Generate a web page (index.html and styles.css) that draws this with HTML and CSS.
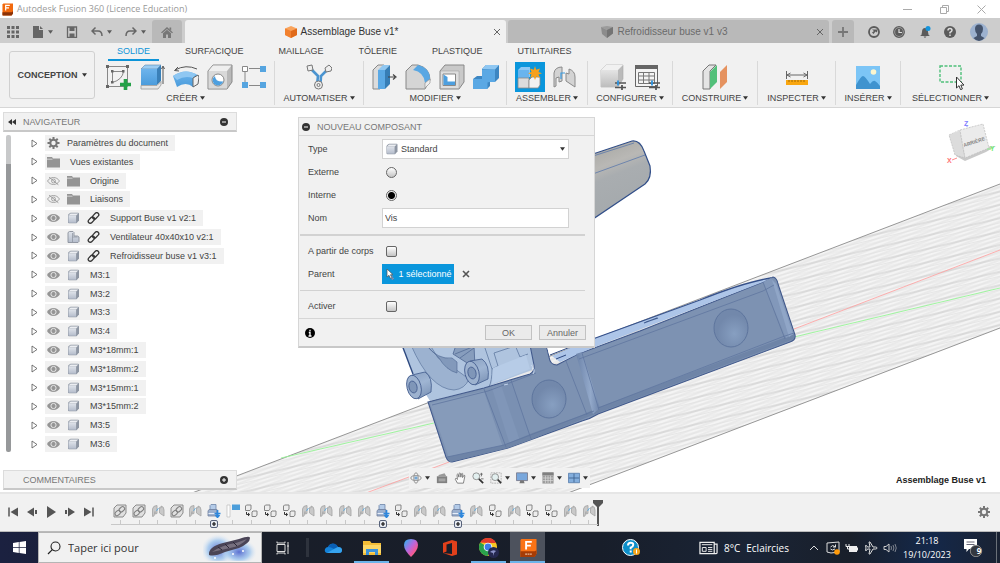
FILE: index.html
```html
<!DOCTYPE html>
<html lang="fr">
<head>
<meta charset="utf-8">
<title>Autodesk Fusion 360 (Licence Education)</title>
<link rel="stylesheet" href="styles.css">
</head>
<body>
<svg class="defs" aria-hidden="true">
  <defs>
    <linearGradient id="gBody" x1="0" y1="0" x2="0" y2="1"><stop offset="0" stop-color="#dfe3ea"/><stop offset="1" stop-color="#b4bccb"/></linearGradient>
    <linearGradient id="gBlue" x1="0" y1="0" x2="0" y2="1"><stop offset="0" stop-color="#6db4ec"/><stop offset="1" stop-color="#4b9cdc"/></linearGradient>
    <linearGradient id="gGrey" x1="0" y1="0" x2="0" y2="1"><stop offset="0" stop-color="#e4e4e4"/><stop offset="1" stop-color="#bdbdbd"/></linearGradient>
    <symbol id="caret" viewBox="0 0 6 4"><path d="M0 0h6L3 4z" fill="currentColor"/></symbol>
    <symbol id="tri" viewBox="0 0 7 9"><path d="M1 1v7l5-3.500z" fill="#fff" stroke="#555" stroke-width=".8"/></symbol>
    <symbol id="gear" viewBox="0 0 12 12"><circle cx="6" cy="6" r="3.200" fill="none" stroke="currentColor" stroke-width="2"/><path d="M6 0v2.500M6 9.500V12M0 6h2.500M9.500 6H12M1.800 1.800l1.700 1.700M8.500 8.500l1.700 1.700M1.800 10.200l1.700-1.700M8.500 3.500l1.700-1.700" stroke="currentColor" stroke-width="2"/></symbol>
    <symbol id="folder" viewBox="0 0 13 11"><path d="M0 .5h5l1 1.500h7V11H0z" fill="#949494"/><path d="M0 2.700h5.500" stroke="#eee" stroke-width=".7"/></symbol>
    <symbol id="eye" viewBox="0 0 12 8"><path d="M0 4C2.500-1 9.500-1 12 4 9.500 9 2.500 9 0 4z" fill="#959595"/><circle cx="6" cy="4" r="2.400" fill="none" stroke="#f0f0f0" stroke-width=".8"/></symbol>
    <symbol id="eyeoff" viewBox="0 0 12 8"><path d="M.5 4C3-.3 9-.3 11.500 4 9 8.300 3 8.300.5 4z" fill="none" stroke="#999" stroke-width=".8"/><circle cx="6" cy="4" r="1.800" fill="none" stroke="#999" stroke-width=".8"/><path d="M2 .5l8.500 7" stroke="#999" stroke-width=".9"/></symbol>
    <symbol id="body" viewBox="0 0 12 12"><path d="M.5 3.500Q.5 2.500 1.200 2L3 .8h7.500q1 0 1 1V8.500L9 11.300H1.500q-1 0-1-1z" fill="#8e96a3"/><path d="M1 3.600L3 1.400h7.800L8.600 3.600z" fill="#eceef2"/><path d="M1 3.600h7.600v7.200H1.800q-.8 0-.8-.8z" fill="url(#gBody)"/></symbol>
    <symbol id="asm" viewBox="0 0 12 12"><path d="M.5 1.500L2 .5h3.500l1 1V5H10l1.500 1v4.500l-1 1H.5z" fill="url(#gBody)" stroke="#8a919c" stroke-width=".9"/><path d="M5 2v9M5 6h5" stroke="#8a919c" stroke-width=".7"/></symbol>
    <symbol id="link" viewBox="0 0 12 12"><g fill="none" stroke="#333" stroke-width="1.300" transform="rotate(-45 6 6)"><rect x="-.6" y="4" width="7.200" height="4" rx="2"/><rect x="5.400" y="4" width="7.200" height="4" rx="2"/></g></symbol>
    <symbol id="minus" viewBox="0 0 8 8"><circle cx="4" cy="4" r="4" fill="#333"/><path d="M2 4h4" stroke="#fff"/></symbol>
    <symbol id="plusdot" viewBox="0 0 8 8"><circle cx="4" cy="4" r="4" fill="#333"/><path d="M2 4h4M4 2v4" stroke="#fff"/></symbol>
    <symbol id="cross" viewBox="0 0 8 8"><path d="M1 1l6 6M7 1L1 7" stroke="currentColor" fill="none"/></symbol>
    <symbol id="tl-link" viewBox="0 0 14 14"><path d="M1 4l3-3h9v8l-3 4H1z" fill="#e0e0e0" stroke="#8b8b8b"/><g fill="none" stroke="#808080" stroke-width="1.100" transform="rotate(-42 7 7)"><rect x="1" y="5" width="6" height="4" rx="2"/><rect x="6.500" y="5" width="6" height="4" rx="2"/></g></symbol>
    <symbol id="joint" viewBox="0 0 14 14"><path d="M1.500 12.500V5Q2 1.500 6 1.500v8L4 10V7.500L3 12z" fill="#c9c9c9" stroke="#a3a3a3" stroke-width=".8"/><path d="M8.500 3.500l1.500.5V2q3 .5 3 4v6L8.500 9z" fill="#c9c9c9" stroke="#a3a3a3" stroke-width=".8"/><path d="M5.500 7l2-3" stroke="#5fa9dd" stroke-width=".9"/></symbol>
    <symbol id="copy" viewBox="0 0 14 14"><path d="M1.500 2l1-1H7v4L6 6.500H1.500zM8 8l1-1h4v4l-1 1.500H8z" fill="#ededed" stroke="#858585"/><path d="M2.500 8v2.500H5M4 9l1.700 1.500L4 12" stroke="#333" fill="none"/></symbol>
    <symbol id="newc" viewBox="0 0 14 14"><path d="M3 1.500L4 .5h5v5H3z" fill="#b4cbe8" stroke="#6f87aa" stroke-width=".8"/><path d="M1 7l1-1.500h8V12H1z" fill="#9cb0ce" stroke="#7181a0" stroke-width=".8"/><path d="M1.500 9.500h7" stroke="#e8eef8"/><path d="M10.500 6v7M7.500 9.500h6M8.500 11l2 2.300 2-2.300" stroke="#2e87dc" stroke-width="1.700" fill="none"/></symbol>
    <symbol id="flag" viewBox="0 0 14 14"><path d="M1 1h3v12H1z" fill="#fdfdfd" stroke="#bbb" stroke-width=".7"/><path d="M6 .5h8v5.500H6z" fill="#4d9fdb"/></symbol>
    <symbol id="boxplus" viewBox="0 0 8 8"><rect x=".5" y=".5" width="7" height="7" rx="1.500" fill="#e7ebf2" stroke="#56617a"/><path d="M2 4h4M4 2v4" stroke="#111" stroke-width="1.200"/></symbol>
  </defs>
</svg>

<header class="titlebar">
  <svg class="applogo" viewBox="0 0 12 13"><path d="M1.500 0H12v10l-1.500 3H1L.5 12V1z" fill="#f2690d"/><path d="M.5 9.500h10l1.500-1V11l-1.500 2H.5z" fill="#8c3206"/><path d="M4 7.500V2h4.500M4 4.700h3.600" stroke="#fff" stroke-width="1.300" fill="none"/></svg>
  <h1>Autodesk Fusion 360 (Licence Education)</h1>
  <div class="winbtns">
    <button aria-label="Réduire"><svg viewBox="0 0 9 9"><path d="M0 4.500h9" stroke="#aaa"/></svg></button>
    <button aria-label="Restaurer"><svg viewBox="0 0 9 9"><path d="M.5 2.500h6v6h-6zM2.500 2.500v-2h6v6h-2" stroke="#aaa" fill="none"/></svg></button>
    <button aria-label="Fermer"><svg viewBox="0 0 9 9"><path d="M.5.5l8 8M8.500.5l-8 8" stroke="#aaa"/></svg></button>
  </div>
</header>

<div class="docbar">
  <div class="quick">
    <button aria-label="Données"><svg class="i12" viewBox="0 0 12 12"><path d="M0 0h3v3H0zM4.500 0h3v3h-3zM9 0h3v3H9zM0 4.500h3v3H0zM4.500 4.500h3v3h-3zM9 4.500h3v3H9zM0 9h3v3H0zM4.500 9h3v3h-3zM9 9h3v3H9z" fill="#666"/></svg></button>
    <button aria-label="Fichier"><svg class="i12" viewBox="0 0 12 12"><path d="M1 0h6v4h4v8H1z" fill="#666"/><path d="M8 0l3 3H8z" fill="#666"/></svg><svg class="caret"><use href="#caret"/></svg></button>
    <button aria-label="Enregistrer"><svg class="i12" viewBox="0 0 12 12"><path d="M1.500 1h9v10.300h-9z" fill="none" stroke="#666" stroke-width="1.300"/><path d="M3.500 1h5v4h-5zM3.500 7.500h5V11h-5z" fill="#666"/></svg></button>
    <button aria-label="Annuler"><svg class="i12" viewBox="0 0 12 12"><path d="M4.500 1.500L1 5l3.500 3.500M1.300 5H7q4 0 4 5" fill="none" stroke="#666" stroke-width="1.500"/></svg><svg class="caret"><use href="#caret"/></svg></button>
    <button aria-label="Rétablir"><svg class="i12" viewBox="0 0 12 12"><path d="M7.500 1.500L11 5 7.500 8.500M10.700 5H5q-4 0-4 5" fill="none" stroke="#666" stroke-width="1.500"/></svg><svg class="caret"><use href="#caret"/></svg></button>
  </div>
  <button class="home" aria-label="Accueil"><svg class="i12" viewBox="0 0 12 12"><path d="M6 1l6 5.500-1 .8L6 3 1 7.300l-1-.8zM2 7.200L6 3.800l4 3.400V12H7V8.500H5V12H2zM8.500 1.500h1.700v3l-1.700-1.500z" fill="#777"/></svg></button>
  <div class="doctab active">
    <svg class="i12" viewBox="0 0 12 12"><path d="M6 0l6 2.500V9L6 12 0 9V2.500z" fill="#f9a35c"/><path d="M0 2.500L6 5v7L0 9z" fill="#f2812f"/><path d="M12 2.500L6 5v7l6-3z" fill="#e06a1a"/></svg>
    <span>Assemblage Buse v1*</span>
    <button aria-label="Fermer l'onglet"><svg class="i8"><use href="#cross"/></svg></button>
  </div>
  <div class="doctab">
    <svg class="i12" viewBox="0 0 12 12"><path d="M0 1l6-1 6 1v6l-6 5V4z" fill="#9b9b9b"/><path d="M0 1l6 3v8L1 8z" fill="#8c8c8c"/><path d="M6 4l6-3v6.500L6 12z" fill="#747474"/></svg>
    <span>Refroidisseur buse v1 v3</span>
    <button aria-label="Fermer l'onglet"><svg class="i8"><use href="#cross"/></svg></button>
  </div>
  <div class="docright">
    <button class="newtab" aria-label="Nouvelle conception"><svg class="i10" viewBox="0 0 10 10"><path d="M0 5h10M5 0v10" stroke="#777" stroke-width="1.800"/></svg></button>
    <button aria-label="Extensions"><svg class="i12" viewBox="0 0 12 12"><circle cx="6" cy="6" r="5" fill="none" stroke="#5b5b5b" stroke-width="1.800"/><path d="M4 3.500h5l1-2-1 5-1.500-1L5.500 8 4 6.500 6 5z" fill="#5b5b5b"/></svg></button>
    <button aria-label="Etat"><svg class="i12" viewBox="0 0 12 12"><circle cx="6" cy="6" r="5.300" fill="#aaa" stroke="#5b5b5b" stroke-width="1.200"/><circle cx="6" cy="6" r="3.900" fill="#5b5b5b"/><path d="M6 3v3.500h3" fill="none" stroke="#ddd" stroke-width="1.200"/></svg></button>
    <button aria-label="Notifications"><svg class="i12" viewBox="0 0 12 12"><path d="M1 10q2-1 2-4 0-4 3-4t3 4q0 3 2 4zM4.500 10.500h3L6 12z" fill="#5b5b5b"/><circle cx="9" cy="2.500" r="2.500" fill="#1495dd"/></svg></button>
    <button aria-label="Aide"><svg class="i12" viewBox="0 0 12 12"><circle cx="6" cy="6" r="6" fill="#5b5b5b"/><path d="M4 4.500q0-2 2-2t2 1.800Q8 5.500 6 6.500v1M6 8.500V10" fill="none" stroke="#ddd" stroke-width="1.500"/></svg></button>
    <button aria-label="Profil"><svg class="i18" viewBox="0 0 18 18"><circle cx="9" cy="9" r="9" fill="#9cb1cf"/><path d="M5 6q0-4.500 4-4.500T13 6q0 3-2 5v2l3.500 2Q12 18 9 18t-5.500-3L7 13v-2Q5 9 5 6z" fill="#44536c"/></svg></button>
  </div>
</div>

<div class="ribbon">
  <div class="workspace"><button>CONCEPTION<svg class="caret"><use href="#caret"/></svg></button></div>
  <div class="tools">
    <nav class="rtabs">
      <button class="on">SOLIDE</button><button>SURFACIQUE</button><button>MAILLAGE</button><button>TÔLERIE</button><button>PLASTIQUE</button><button>UTILITAIRES</button>
    </nav>
    <div class="groups">
      <section class="group">
        <div class="icons">
          <button aria-label="Esquisse"><svg viewBox="0 0 26 26"><path d="M2.500 2.500h20v20h-20z" fill="none" stroke="#888"/><path d="M1 1h3v3H1zM21 1h3v3h-3zM1 21h3v3H1z" fill="#666"/><path d="M7.500 7.500h11q-1 8-11 11z" fill="none" stroke="#888"/><path d="M6 6h2.500v2.500H6zM17 6h2.500v2.500H17zM6 17h2.500v2.500H6z" fill="#666"/><path d="M20.500 15v11M15 20.500h11" stroke="#24a148" stroke-width="3.600"/></svg></button>
          <button aria-label="Extrusion"><svg viewBox="0 0 26 26"><path d="M2 5l4-4h16l-4 4z" fill="#9bcdf3" stroke="#5c87ad" stroke-width=".6"/><path d="M2 5h16v16H2z" fill="url(#gBlue)"/><path d="M18 5l4-4v16l-4 4z" fill="#3a80b8"/><path d="M2 21.500h16l4-4v3.500l-3 4H2z" fill="#e6e6e6" stroke="#999" stroke-width=".8"/><path d="M24 3v17M22.500 5L24 2l1.500 3" fill="none" stroke="#555"/></svg></button>
          <button aria-label="Révolution"><svg viewBox="0 0 26 26"><path d="M0 12Q13 3 26 12l-1 8-5 3Q13 17 4 23z" fill="url(#gBlue)"/><path d="M0 12Q12 4 23 10l-3 4q-8-3-16 2z" fill="#8fc7f2"/><path d="M20 14l5-3 1 2-1 7-5 3z" fill="#eee" stroke="#666"/><path d="M2 6q11-6 22-1M5 3L1.500 6.500 6 7" fill="none" stroke="#555"/></svg></button>
          <button aria-label="Perçage"><svg viewBox="0 0 26 26"><path d="M1 7l5-6h19v17l-5 7H1z" fill="#b9b9b9" stroke="#888"/><path d="M1.500 7l4.500-5.500h18.500L20 7z" fill="#efefef"/><path d="M1.500 7H20v17.500H1.500z" fill="#d9d9d9"/><circle cx="11" cy="16" r="6" fill="#fff" stroke="#888"/><path d="M8 12q0 6 8.500 5.500Q14 21.500 11 21.500q-5-.5-5.500-5.500Q6 13 8 12z" fill="#4d9fdf"/></svg></button>
          <button aria-label="Réseau"><svg viewBox="0 0 26 26"><path d="M8 4.500h11M4 8v11M8 21.500h11" stroke="#888"/><path d="M1.500 2.500h5v5h-5z" fill="#fff" stroke="#888"/><path d="M19 2h6v6h-6zM1 18h6v6H1zM19 18h6v6h-6z" fill="#56a5e0"/></svg></button>
        </div>
        <button class="glabel">CRÉER<svg class="caret"><use href="#caret"/></svg></button>
      </section>
      <section class="group">
        <div class="icons"><button aria-label="Automatiser"><svg viewBox="0 0 26 26"><path d="M4 4l8 8q-1 5 0 8h2q1-3 1-8l7-7" fill="none" stroke="#4a94d0" stroke-width="2.600"/><path d="M1 2l5-1 1 5-5 1z" fill="#eee" stroke="#777"/><path d="M19 4l4-3 3 3-1 3-5 1z" fill="#eee" stroke="#777"/><circle cx="12.500" cy="21" r="4" fill="#eee" stroke="#777"/><circle cx="12.500" cy="21" r="1.500" fill="none" stroke="#777"/></svg></button></div>
        <button class="glabel">AUTOMATISER<svg class="caret"><use href="#caret"/></svg></button>
      </section>
      <section class="group">
        <div class="icons">
          <button aria-label="Appuyer/tirer"><svg viewBox="0 0 26 26"><path d="M2 6l5-5h6L9 6v19H2z" fill="#dcdcdc" stroke="#888"/><path d="M7 6l5-5h7l-5 5z" fill="#8fc7f2"/><path d="M7 6h7v19H7z" fill="#5ba9e5"/><path d="M14 6l5-5v19l-5 5z" fill="#377eb6"/><path d="M17 13h7M22 10.500l3 2.500-3 2.500" stroke="#444" fill="none" stroke-width="1.200"/></svg></button>
          <button aria-label="Congé"><svg viewBox="0 0 26 26"><path d="M1 7l6-6h6q12 3 12 15l-5 9H1z" fill="#d5d5d5" stroke="#888"/><path d="M8 6l5-5q12 3 12 14l-5 4Q19 8 8 6z" fill="#59a7e3"/><path d="M20 19l5-4v4l-5 5z" fill="#eee" stroke="#888" stroke-width=".6"/></svg></button>
          <button aria-label="Coque"><svg viewBox="0 0 26 26"><path d="M1 7l5-6h19v17l-5 7H1z" fill="#c9c9c9" stroke="#888"/><path d="M1.500 7H20v17.500H1.500z" fill="#dedede" stroke="#999" stroke-width=".5"/><path d="M4 10h12.500v11.500H4z" fill="#fff" stroke="#888"/><path d="M4.500 10.500L8.500 13v4.500H16v3.500H4.500z" fill="#4d9fdf"/></svg></button>
          <button aria-label="Combiner"><svg viewBox="0 0 26 26"><path d="M0 15l4-3h5V5l4-4h13v13l-4 4h-5v4l-3 3H0z" fill="#3c86c2"/><path d="M0 15h9V5.500h13V18h-5.500l-2 .5V25H0z" fill="#5aa8e4"/><path d="M9 5l4-4h13l-4 4.500z" fill="#8fc7f2"/></svg></button>
        </div>
        <button class="glabel">MODIFIER<svg class="caret"><use href="#caret"/></svg></button>
      </section>
      <section class="group">
        <div class="icons">
          <button class="sel" aria-label="Nouveau composant"><svg viewBox="0 0 26 26"><path d="M1 6l3-3h9v10H1z" fill="#8cc8f5"/><path d="M1 6h11v8H1z" fill="#69b4ee"/><path d="M1 14h11v10H1z" fill="#dcdcdc" stroke="#888" stroke-width=".8"/><path d="M12 16l3-3h8v8l-2 3h-9z" fill="#f1f1f1" stroke="#888" stroke-width=".8"/><path d="M18 2l1.200 3.800L23 4.500 21.500 8l3.500 1.200-3.500 1.300 1.300 3.300-3.500-1.200L18 16l-1.300-3.400-3.500 1.200 1.300-3.300L11 9.200 14.500 8 13 4.500l3.800 1.300z" fill="#f5a01c"/></svg></button>
          <button aria-label="Liaison"><svg viewBox="0 0 26 26"><path d="M3 23V9Q4 3 11 3v14l-3 1v-5l-3 1v8z" fill="#d3d3d3" stroke="#8a8a8a"/><path d="M15 9l3 1V5q6 2 6 8v10l-9-6z" fill="#d3d3d3" stroke="#8a8a8a"/><path d="M10 15V9h4" stroke="#3a9be0" fill="none" stroke-width="1.200"/></svg></button>
        </div>
        <button class="glabel">ASSEMBLER<svg class="caret"><use href="#caret"/></svg></button>
      </section>
      <section class="group">
        <div class="icons">
          <button aria-label="Configurer"><svg viewBox="0 0 26 26"><path d="M1 6l5-5h17v14l-5 8H1z" fill="#bababa" stroke="#aaa" stroke-width=".6"/><path d="M1 6l5-5h17l-5 5z" fill="#f1f1f1"/><path d="M1 6h17v17H1z" fill="url(#gGrey)"/><path d="M15 19h11M15 23.500h11" stroke="#555" stroke-width="1.300"/><path d="M18 16.500v5" stroke="#2b93e0" stroke-width="1.800"/><path d="M22 21v5" stroke="#555" stroke-width="1.800"/></svg></button>
          <button aria-label="Table"><svg viewBox="0 0 26 26"><path d="M1.500 1.500h22v21h-22z" fill="#f4f4f4" stroke="#666"/><path d="M1 1h23v4H1z" fill="#666"/><path d="M4.500 8.500h16v11h-16zM4.500 12h16M4.500 16h16M9.500 8.500v11M15 8.500v11" fill="none" stroke="#777"/><path d="M15 19h11M15 23.500h11" stroke="#555" stroke-width="1.300"/><path d="M18 16.500v5" stroke="#2b93e0" stroke-width="1.800"/><path d="M22 21v5" stroke="#555" stroke-width="1.800"/></svg></button>
        </div>
        <button class="glabel">CONFIGURER<svg class="caret"><use href="#caret"/></svg></button>
      </section>
      <section class="group">
        <div class="icons"><button aria-label="Construire"><svg viewBox="0 0 26 26"><path d="M1 7l6-6h7L8 7v18H1z" fill="#e4e4e4" stroke="#777"/><path d="M8 8l7-7v17l-7 7z" fill="#52c07a"/><path d="M18 8l7-7v17l-7 7z" fill="#e5925f"/></svg></button></div>
        <button class="glabel">CONSTRUIRE<svg class="caret"><use href="#caret"/></svg></button>
      </section>
      <section class="group">
        <div class="icons"><button aria-label="Mesurer"><svg viewBox="0 0 26 26"><path d="M2.500 7v8M23.500 7v8M3 11h20M6.500 9L3 11l3.500 2M19.500 9L23 11l-3.500 2" fill="none" stroke="#666"/><path d="M2 16h22v5H2z" fill="#f9a60f"/><path d="M5 16v2M8 16v2M11 16v2M14 16v2M17 16v2M20 16v2" stroke="#8a5a00" stroke-width=".8"/></svg></button></div>
        <button class="glabel">INSPECTER<svg class="caret"><use href="#caret"/></svg></button>
      </section>
      <section class="group">
        <div class="icons"><button aria-label="Insérer"><svg viewBox="0 0 26 26"><path d="M1 2h24v23H1z" fill="#7cc5f6"/><path d="M1 21q5-9 7-9t7 8q3-4 5-3t5 5v3H1z" fill="#3f93cf"/><circle cx="18.500" cy="8" r="2.800" fill="#fbf6cf"/></svg></button></div>
        <button class="glabel">INSÉRER<svg class="caret"><use href="#caret"/></svg></button>
      </section>
      <section class="group">
        <div class="icons"><button aria-label="Sélectionner"><svg viewBox="0 0 26 26"><path d="M2 2h21v16H2z" fill="none" stroke="#4fc07a" stroke-width="1.400" stroke-dasharray="3 1.500"/><path d="M18.500 13v11l2.500-2.300 1.600 4 1.800-.8-1.600-3.800H26z" fill="#fff" stroke="#333"/></svg></button></div>
        <button class="glabel">SÉLECTIONNER<svg class="caret"><use href="#caret"/></svg></button>
      </section>
    </div>
  </div>
</div>

<main class="canvas">
  <svg class="scene" viewBox="0 108 1000 384" preserveAspectRatio="xMinYMin slice" aria-hidden="true">
    <defs>
      <pattern id="pA" width="40" height="12" patternUnits="userSpaceOnUse" patternTransform="rotate(-21)"><path d="M0 1h40M0 5h40M0 9h40" stroke="#dcdcdc" stroke-width=".8"/></pattern>
      <pattern id="pB" width="40" height="13" patternUnits="userSpaceOnUse" patternTransform="rotate(-13.400)"><path d="M0 2h40" stroke="#c2c2c2" stroke-width=".8"/><path d="M0 6.500h40M0 10h40" stroke="#e2e2e2" stroke-width=".8"/></pattern>
      <radialGradient id="hole" cx=".6" cy=".65"><stop offset="0" stop-color="#879fc1"/><stop offset="1" stop-color="#7288ab"/></radialGradient>
      <linearGradient id="edge" x1="0" x2="1"><stop offset="0" stop-color="#6c83a9"/><stop offset=".6" stop-color="#93a9ca"/><stop offset="1" stop-color="#6c83a9"/></linearGradient>
      <linearGradient id="arm" x1="0" y1="0" x2=".3" y2="1"><stop offset="0" stop-color="#a3a39f"/><stop offset=".35" stop-color="#b9b8b5"/><stop offset=".5" stop-color="#a9adb0"/><stop offset="1" stop-color="#a4a9ac"/></linearGradient>
      <linearGradient id="cyl" x1="0" y1="0" x2=".3" y2="1"><stop offset="0" stop-color="#8ba2c3"/><stop offset=".5" stop-color="#9fb5d3"/><stop offset="1" stop-color="#8299bb"/></linearGradient>
    </defs>
    <path d="M192 493L1000 184V328L568 493z" fill="#f4f4f4"/>
    <path d="M192 493L1000 184V328L568 493z" fill="url(#pA)"/>
    <path d="M192 493L1000 184V328L568 493z" fill="url(#pB)"/>
    <path d="M192 493L1000 184M568 493L1000 328" stroke="#8c8c8c" stroke-width=".9"/>
    <path d="M794 329L1000 250M449 462L366 493" stroke="#ff9d9d" stroke-width=".8"/>
    <path d="M794 337L1000 288M281 458L434 423" stroke="#96f596" stroke-width=".9"/>

    <path d="M590 155L632 141Q640 140 644 151L650 166Q652 178 645 184L590 221z" fill="url(#arm)" stroke="#324f89" stroke-width="1.200"/>
    <path d="M590 175L645 155M590 157L634 143" stroke="#5c78ab" stroke-width=".8"/>

    <path d="M400 340L412 372 430 401 484 388 532 370 538 340z" fill="#afc4df"/>
    <path d="M402 345L413 374" stroke="#2f4a80" stroke-width="1.400"/>
    <path d="M411 345Q430 389 454 390 465 389 469 379L451 366 438 358 430 345z" fill="#9cb2d0" stroke="#5c759d" stroke-width=".7"/>
    <path d="M426 345Q438 360 452 358L457 362V373Q446 370 439 358z" fill="#8299bb" stroke="#566f98" stroke-width=".7"/>
    <path d="M456 345l-3 9 22 14 -1-23z" fill="#879dbd" stroke="#4e6690" stroke-width=".8"/>
    <path d="M455 354l20-8M460 358l14-10" stroke="#4e6690" stroke-width=".7"/>
    <path d="M484 345l8 24 6-3-4-13 21-7M492 369q0 12-3 18M515 345l5 12 8-3" fill="none" stroke="#60799f" stroke-width=".8"/>
    <path d="M493 368L526 355 530 369 492 384z" fill="#b7cce7"/>

    <path d="M428 402L484 388 530 374Q535 371 534 365L529 340H545L549 357Q550 365 557 365L578 354 640 331 763 282 773 277Q777 278 778 284L795 335Q796 340 790 342L598 414Q590 419 582 421L530 440 508 448 452 462Q448 462 446 457z" fill="#7d92b2" stroke="#41598c" stroke-width="1.100"/>
    <path d="M430 403L484 391 503 447 450 461z" fill="#869bba"/>
    <path d="M484 391L511 381 531 437 508 447 503 447z" fill="#7a90b2"/>
    <path d="M492 388l9-3 19 56-10 4z" fill="#8096b8"/>
    <path d="M447 457L504 445 530 434 582 415 597 408 794 334 794 339 598 413 530 440 508 448 450 462z" fill="#6e84a7"/>
    <path d="M552 356L575 346 595 338 700 300Q745 282 771 278L763 282 600 345 578 354 560 362z" fill="#adc5e8"/>
    <path d="M590 340L700 300Q745 282 771 278" fill="none" stroke="#35508a" stroke-width="1.300"/>
    <path d="M549 354L573 346 579 340H545z" fill="#fff"/>
    <path d="M550 355L573 346M556 359l10-4" stroke="#2d4880"/>
    <path d="M576 354L582 352 600 408 593 414z" fill="url(#edge)"/>
    <path d="M763 282L771 278 777 284 794 334 786 338z" fill="#8298ba"/>
    <path d="M772 280l4 4 17 50-4 3z" fill="#90a6c7"/>
    <path d="M432 405L488 391 536 373M484 389l22 58M511 380l20 59M566 361l21 54M582 353l17 57M579 359L763 291 774 285M763 282l22 57M598 408L782 337 794 333M447 457L504 445 594 411" fill="none" stroke="#5f769f" stroke-width=".8"/>
    <ellipse cx="549" cy="399" rx="17" ry="19" fill="url(#hole)" stroke="#5a729b" stroke-width=".9"/>
    <ellipse cx="731" cy="328" rx="17" ry="19" fill="url(#hole)" stroke="#5a729b" stroke-width=".9"/>
    <path d="M644 323l13-5M646 322l12-4" stroke="#405c91" stroke-width="1.200"/>
    <path d="M531 365q5 5 2 9M504 385l4-1" stroke="#c5d6ee" fill="none"/>
    <g stroke="#4a6393" stroke-width=".9">
      <path d="M412 375l13-3q8 5 6 20l-13 7z" fill="url(#cyl)"/>
      <ellipse cx="414" cy="387" rx="7" ry="12" fill="#9db2cf" transform="rotate(-14 414 387)"/>
      <ellipse cx="413" cy="387" rx="4" ry="6" fill="#7f96b8" transform="rotate(-14 413 387)"/>
      <path d="M470 361l12-2q8 6 6 20l-13 6z" fill="url(#cyl)"/>
      <ellipse cx="472" cy="373" rx="7" ry="12" fill="#9db2cf" transform="rotate(-14 472 373)"/>
      <ellipse cx="472" cy="373" rx="4" ry="6" fill="#7f96b8" transform="rotate(-14 472 373)"/>
    </g>

    <path d="M956 156l9 5 21-9 10-6-30 2z" fill="#c9c9c9"/>
    <path d="M949 135L960 130 965 158 955 155z" fill="#dcdcdc" stroke="#bbb" stroke-width=".7" stroke-dasharray="2 1"/>
    <path d="M949 135L969 127 983 124 960 130z" fill="#f5f5f5"/>
    <path d="M960 130L983 124 989 148 965 158z" fill="#ebebeb" stroke="#bbb" stroke-width=".7" stroke-dasharray="2 1"/>
    <path d="M952 160l5-2" stroke="#ff8d8d"/><path d="M987 149l4 0" stroke="#8df08d"/><path d="M967 125v2" stroke="#99f"/>
    <text class="cube" x="964" y="147" transform="rotate(-18 964 147)">ARRIÈRE</text>
    <text class="axis" x="947" y="163" fill="#ff7373">X</text>
    <text class="axis" x="990" y="151" fill="#6ff06f">Y</text>
    <text class="axis" x="964" y="126" fill="#8080ff">Z</text>
  </svg>

  <aside class="side">
    <div class="panelhead"><svg class="rew" viewBox="0 0 8 6"><path d="M4 0v6L0 3zM8 0v6L4 3z" fill="#333"/></svg><h2>NAVIGATEUR</h2><button aria-label="Réduire"><svg class="i8"><use href="#minus"/></svg></button></div>
    <div class="treewrap">
      <div class="scroll"></div>
      <ul class="tree">
        <li><button aria-label="Développer"><svg class="tri"><use href="#tri"/></svg></button><span class="node"><svg class="ic gear"><use href="#gear"/></svg>Paramètres du document</span></li>
        <li><button aria-label="Développer"><svg class="tri"><use href="#tri"/></svg></button><span class="node"><svg class="ic"><use href="#folder"/></svg><span class="lead">Vues existantes</span></span></li>
        <li><button aria-label="Développer"><svg class="tri"><use href="#tri"/></svg></button><span class="node"><svg class="ic"><use href="#eyeoff"/></svg><svg class="ic"><use href="#folder"/></svg><span class="lead">Origine</span></span></li>
        <li><button aria-label="Développer"><svg class="tri"><use href="#tri"/></svg></button><span class="node"><svg class="ic"><use href="#eyeoff"/></svg><svg class="ic"><use href="#folder"/></svg><span class="lead">Liaisons</span></span></li>
        <li><button aria-label="Développer"><svg class="tri"><use href="#tri"/></svg></button><span class="node"><svg class="ic"><use href="#eye"/></svg><svg class="ic"><use href="#body"/></svg><svg class="ic"><use href="#link"/></svg><span class="lead">Support Buse v1 v2:1</span></span></li>
        <li><button aria-label="Développer"><svg class="tri"><use href="#tri"/></svg></button><span class="node"><svg class="ic"><use href="#eye"/></svg><svg class="ic"><use href="#asm"/></svg><svg class="ic"><use href="#link"/></svg><span class="lead">Ventilateur 40x40x10 v2:1</span></span></li>
        <li><button aria-label="Développer"><svg class="tri"><use href="#tri"/></svg></button><span class="node"><svg class="ic"><use href="#eye"/></svg><svg class="ic"><use href="#body"/></svg><svg class="ic"><use href="#link"/></svg><span class="lead">Refroidisseur buse v1 v3:1</span></span></li>
        <li><button aria-label="Développer"><svg class="tri"><use href="#tri"/></svg></button><span class="node"><svg class="ic"><use href="#eye"/></svg><svg class="ic"><use href="#body"/></svg><span class="lead">M3:1</span></span></li>
        <li><button aria-label="Développer"><svg class="tri"><use href="#tri"/></svg></button><span class="node"><svg class="ic"><use href="#eye"/></svg><svg class="ic"><use href="#body"/></svg><span class="lead">M3:2</span></span></li>
        <li><button aria-label="Développer"><svg class="tri"><use href="#tri"/></svg></button><span class="node"><svg class="ic"><use href="#eye"/></svg><svg class="ic"><use href="#body"/></svg><span class="lead">M3:3</span></span></li>
        <li><button aria-label="Développer"><svg class="tri"><use href="#tri"/></svg></button><span class="node"><svg class="ic"><use href="#eye"/></svg><svg class="ic"><use href="#body"/></svg><span class="lead">M3:4</span></span></li>
        <li><button aria-label="Développer"><svg class="tri"><use href="#tri"/></svg></button><span class="node"><svg class="ic"><use href="#eye"/></svg><svg class="ic"><use href="#body"/></svg><span class="lead">M3*18mm:1</span></span></li>
        <li><button aria-label="Développer"><svg class="tri"><use href="#tri"/></svg></button><span class="node"><svg class="ic"><use href="#eye"/></svg><svg class="ic"><use href="#body"/></svg><span class="lead">M3*18mm:2</span></span></li>
        <li><button aria-label="Développer"><svg class="tri"><use href="#tri"/></svg></button><span class="node"><svg class="ic"><use href="#eye"/></svg><svg class="ic"><use href="#body"/></svg><span class="lead">M3*15mm:1</span></span></li>
        <li><button aria-label="Développer"><svg class="tri"><use href="#tri"/></svg></button><span class="node"><svg class="ic"><use href="#eye"/></svg><svg class="ic"><use href="#body"/></svg><span class="lead">M3*15mm:2</span></span></li>
        <li><button aria-label="Développer"><svg class="tri"><use href="#tri"/></svg></button><span class="node"><svg class="ic"><use href="#eye"/></svg><svg class="ic"><use href="#body"/></svg><span class="lead">M3:5</span></span></li>
        <li><button aria-label="Développer"><svg class="tri"><use href="#tri"/></svg></button><span class="node"><svg class="ic"><use href="#eye"/></svg><svg class="ic"><use href="#body"/></svg><span class="lead">M3:6</span></span></li>
      </ul>
    </div>
    <div class="panelhead"><span class="rew"></span><h2>COMMENTAIRES</h2><button aria-label="Ajouter"><svg class="i8"><use href="#plusdot"/></svg></button></div>
  </aside>

  <form class="dialog">
    <div class="dhead"><svg class="i8"><use href="#minus"/></svg><h2>NOUVEAU COMPOSANT</h2></div>
    <div class="dbody">
      <div class="row"><label for="type">Type</label><div class="selectbox"><svg class="i12"><use href="#body"/></svg><select id="type"><option>Standard</option></select><svg class="caret"><use href="#caret"/></svg></div></div>
      <div class="row"><label for="ext">Externe</label><input type="radio" id="ext" name="place"></div>
      <div class="row"><label for="int">Interne</label><input type="radio" id="int" name="place" checked></div>
      <div class="row"><label for="nom">Nom</label><input type="text" id="nom" value="Vis"></div>
      <hr class="thick">
      <div class="row"><label for="corps">A partir de corps</label><input type="checkbox" id="corps"></div>
      <div class="row"><label for="parent">Parent</label><div class="pick"><button type="button" id="parent"><svg class="i12" viewBox="0 0 12 12"><path d="M3 1v8l2-1.700 1.300 3 1.500-.6-1.300-3H9z" fill="#fff" stroke="#555" stroke-width=".7"/><path d="M8 7.500v4M8 11.500l2-1.500" stroke="#e88" stroke-width=".6"/></svg>1 sélectionné</button><button type="button" aria-label="Effacer"><svg class="i8" viewBox="0 0 8 8"><path d="M1 1l6 6M7 1L1 7" stroke="#555" stroke-width="1.600"/></svg></button></div></div>
      <hr>
      <div class="row"><label for="act">Activer</label><input type="checkbox" id="act"></div>
    </div>
    <div class="dfoot"><svg class="info" viewBox="0 0 10 10"><circle cx="5" cy="5" r="5" fill="#000"/><path d="M5 1.700v1.600M3.800 4.500H5V8M3.500 8h3" stroke="#fff" stroke-width="1.300" fill="none"/></svg><button type="button">OK</button><button type="button">Annuler</button></div>
  </form>

  <div class="navbar">
    <button aria-label="Orbite"><svg class="i12" viewBox="0 0 14 14"><ellipse cx="7" cy="7" rx="6" ry="2.800" fill="none" stroke="#888"/><ellipse cx="7" cy="7" rx="2.500" ry="6" fill="none" stroke="#888"/><path d="M7 5v4M5 7h4" stroke="#3a86c8"/></svg><svg class="caret"><use href="#caret"/></svg></button>
    <button aria-label="Regarder"><svg class="i12" viewBox="0 0 14 14"><path d="M1 5h12v8H1z" fill="#808080"/><path d="M3 7.500h8v3.500H3z" fill="#a5a5a5"/><path d="M3 3.500l7-2 2 3.500H3z" fill="#999"/></svg></button>
    <button aria-label="Panoramique"><svg class="i12" viewBox="0 0 14 14"><path d="M4 13L1.500 8.500q0-1.500 1.500-.8l1 1L3.500 3q.8-1.200 1.500 0L5.700 6 6 1.500q1-1.200 1.500 0L8 6l.8-4q1-1 1.400 0L10 6.500 11.500 4q1.200-.5 1.200.7L11 13z" fill="#fafafa" stroke="#666" stroke-width=".9"/></svg></button>
    <button aria-label="Zoom"><svg class="i12" viewBox="0 0 14 14"><circle cx="5" cy="5" r="4" fill="#e2efef" stroke="#888"/><path d="M8 8l5 5" stroke="#333" stroke-width="2"/><path d="M11 1v4M9.500 2.500h3M10.500 8h3" stroke="#555" stroke-width=".9"/></svg></button>
    <button aria-label="Ajuster"><svg class="i12" viewBox="0 0 14 14"><path d="M1 1h12v12H1z" fill="none" stroke="#aaa" stroke-dasharray="2 1"/><circle cx="6" cy="6" r="4" fill="#e2efef" stroke="#888"/><path d="M9 9l4 4" stroke="#333" stroke-width="2"/></svg><svg class="caret"><use href="#caret"/></svg></button>
    <button aria-label="Affichage"><svg class="i12" viewBox="0 0 14 14"><path d="M.5 1h13v9H.5z" fill="#79a7dc" stroke="#778"/><path d="M5 10h4l1 3H4z" fill="#777"/></svg><svg class="caret"><use href="#caret"/></svg></button>
    <button aria-label="Grille"><svg class="i12" viewBox="0 0 14 14"><path d="M.5.5h13v13H.5z" fill="#9b9b9b"/><path d="M1 4h12M1 7h12M1 10h12M4 1v12M7 1v12M10 1v12" stroke="#ddd" stroke-width=".8"/><path d="M.5.5h13V4H.5z" fill="#808080"/></svg><svg class="caret"><use href="#caret"/></svg></button>
    <button aria-label="Vues"><svg class="i12" viewBox="0 0 14 14"><path d="M.5 1.500h13v11H.5z" fill="#83aedd" stroke="#5a7fad"/><path d="M7 2v10M1 7h12" stroke="#3e628f"/></svg><svg class="caret"><use href="#caret"/></svg></button>
  </div>
  <p class="docname">Assemblage Buse v1</p>
</main>

<section class="timeline">
  <div class="play">
    <button aria-label="Début"><svg class="i12" viewBox="0 0 12 12"><path d="M2 1.500v9" stroke="#555" stroke-width="1.500"/><path d="M11 1.500v9L3.500 6z" fill="#555"/></svg></button>
    <button aria-label="Précédent"><svg class="i12" viewBox="0 0 12 12"><path d="M8 1.500v9L1 6zM9 4h2v4H9z" fill="#555"/></svg></button>
    <button aria-label="Lecture"><svg class="i12" viewBox="0 0 12 12"><path d="M2 0v12l9-6z" fill="#555"/></svg></button>
    <button aria-label="Suivant"><svg class="i12" viewBox="0 0 12 12"><path d="M4 1.500v9L11 6zM1 4h2v4H1z" fill="#555"/></svg></button>
    <button aria-label="Fin"><svg class="i12" viewBox="0 0 12 12"><path d="M10 1.500v9" stroke="#555" stroke-width="1.500"/><path d="M1 1.500v9L8.500 6z" fill="#555"/></svg></button>
  </div>
  <ol class="steps">
    <li><svg><use href="#tl-link"/></svg></li><li><svg><use href="#tl-link"/></svg></li><li><svg><use href="#joint"/></svg></li><li><svg><use href="#tl-link"/></svg></li><li><svg><use href="#joint"/></svg></li>
    <li><svg><use href="#newc"/></svg><svg class="box"><use href="#boxplus"/></svg></li><li><svg><use href="#flag"/></svg></li><li><svg><use href="#copy"/></svg></li><li><svg><use href="#copy"/></svg></li><li><svg><use href="#copy"/></svg></li>
    <li><svg><use href="#joint"/></svg></li><li><svg><use href="#joint"/></svg></li><li><svg><use href="#joint"/></svg></li><li><svg><use href="#joint"/></svg></li><li><svg><use href="#newc"/></svg><svg class="box"><use href="#boxplus"/></svg></li>
    <li><svg><use href="#copy"/></svg></li><li><svg><use href="#joint"/></svg></li><li><svg><use href="#joint"/></svg></li><li><svg><use href="#newc"/></svg><svg class="box"><use href="#boxplus"/></svg></li><li><svg><use href="#joint"/></svg></li>
    <li><svg><use href="#copy"/></svg></li><li><svg><use href="#joint"/></svg></li><li><svg><use href="#copy"/></svg></li><li><svg><use href="#copy"/></svg></li><li><svg><use href="#joint"/></svg></li><li><svg><use href="#joint"/></svg></li>
  </ol>
  <svg class="marker" viewBox="0 0 10 26"><path d="M0 0h10v3L6 7v19H4V7L0 3z" fill="#555"/></svg>
  <button class="tlset" aria-label="Paramètres"><svg class="i12"><use href="#gear"/></svg></button>
</section>

<footer class="taskbar">
  <button class="start" aria-label="Démarrer"><svg viewBox="0 0 13 13"><path d="M0 2l5.800-1v5.200H0zM6.500.9L13 0v6.200H6.500zM0 6.900h5.800V12L0 11zM6.500 6.900H13V13l-6.500-.9z" fill="#fff"/></svg></button>
  <label class="search" for="q">
    <svg class="i14" viewBox="0 0 14 14"><circle cx="8.500" cy="5.500" r="4.500" fill="none" stroke="#222" stroke-width="1.100"/><path d="M5.300 8.700L1 13" stroke="#222" stroke-width="1.200"/></svg>
    <input id="q" type="text" placeholder="Taper ici pour">
    <svg class="ship" viewBox="0 0 54 27"><defs><radialGradient id="halo"><stop offset="0" stop-color="#5b6fd0"/><stop offset=".6" stop-color="#9cc4ee" stop-opacity=".8"/><stop offset="1" stop-color="#dfeaf6" stop-opacity="0"/></radialGradient></defs><ellipse cx="15" cy="16" rx="17" ry="16" fill="url(#halo)"/><ellipse cx="36" cy="18" rx="18" ry="13" fill="url(#halo)"/><path d="M6 21Q5 13 20 9L36 5Q47 1 47 4q0 5-11 10L22 18Q11 23 6 21z" fill="#4a4456"/><path d="M9 18q10-7 24-9l11-4q-6 7-17 9z" fill="#77707f"/><path d="M15 13l4 3M22 10l4 4M30 8l4 4" stroke="#2d2838"/><circle cx="30" cy="20" r="1" fill="#fff"/><circle cx="40" cy="17" r="1" fill="#fff"/><circle cx="12" cy="24" r="1" fill="#fff"/></svg>
  </label>
  <div class="apps">
    <button aria-label="Vue des tâches"><svg class="i14" viewBox="0 0 14 14"><path d="M1 3.500h8v7H1zM1 .5v1.500h8V.5M1 13.500V12h8v1.500M12 1v12M11 5h2" fill="none" stroke="#ddd"/></svg></button>
    <span class="bar"></span>
    <button aria-label="OneDrive"><svg class="i18" viewBox="0 0 18 18"><path d="M3 14q-3-1-2-4 1-2 3-2 2-4 6-3 3 1 4 3 3 0 4 3 0 3-3 3z" fill="#1482d8"/><path d="M4 8q3 0 6 2l4-2q-1-3-4-3.500Q6 4 4 8z" fill="#0a5fb4"/><path d="M3 14l7-4 4-2q4 0 4 3t-3 3z" fill="#36a3ee"/></svg></button>
    <button class="run" aria-label="Explorateur"><svg class="i18" viewBox="0 0 18 18"><path d="M0 2h7l1.500 2H18v12H0z" fill="#f3bd37"/><path d="M0 6h18v8H0z" fill="#fcd766"/><path d="M3 10h12v6h-3v-3H6v3H3z" fill="#3c93dc"/></svg></button>
    <button aria-label="Paint 3D"><svg class="i18" viewBox="0 0 18 18"><defs><linearGradient id="pin" x1="0" y1="0" x2="1" y2="1"><stop offset="0" stop-color="#22b8f0"/><stop offset=".45" stop-color="#b569e0"/><stop offset=".7" stop-color="#f0589a"/><stop offset="1" stop-color="#f9a63a"/></linearGradient></defs><path d="M9 0q7 0 7 6 0 5-7 12Q2 11 2 6 2 0 9 0z" fill="url(#pin)"/></svg></button>
    <button aria-label="Office"><svg class="i18" viewBox="0 0 18 18"><path d="M2 4l9-3 5 1.500v13L11 17l-9-3 9 1V4L5.500 5.500v7L2 14z" fill="#e2401b"/></svg></button>
    <button class="run" aria-label="Chrome"><svg class="i20" viewBox="0 0 20 20"><circle cx="9" cy="9" r="9" fill="#f8c522"/><path d="M1.200 4.500A9 9 0 0 1 17 5H9z" fill="#e33b2e"/><path d="M1.200 4.500A9 9 0 0 0 8.500 18L12 11z" fill="#2aa24c"/><circle cx="9" cy="9" r="4.300" fill="#fff"/><circle cx="9" cy="9" r="3.400" fill="#3e7de8"/><circle cx="14.500" cy="14.500" r="5.500" fill="#25284f"/><path d="M11 14q3-3 6-1l-2 2v3l-1-3z" fill="#8c93c8"/></svg></button>
    <button class="run cur" aria-label="Fusion 360"><svg class="i18" viewBox="0 0 18 19"><path d="M2 0h16v15l-2 4H1V1z" fill="#fb7315"/><path d="M1 13h15l2-1v4l-2 3H1z" fill="#a63c06"/><path d="M7 11V3h6M7 7h5" stroke="#fff" stroke-width="2" fill="none"/><path d="M6 16h7" stroke="#e8b89a" stroke-width="1.500" stroke-dasharray="2 .6"/></svg></button>
  </div>
  <button class="help" aria-label="Aide"><svg class="i18" viewBox="0 0 18 18"><circle cx="8.500" cy="8.500" r="8" fill="#0d8fc9" stroke="#fff"/><path d="M6 6.500q0-2.700 2.700-2.700T11.200 6q0 1.500-2.500 2.700v1.500M8.700 11.500v2" stroke="#fff" stroke-width="2" fill="none"/><circle cx="14.500" cy="12.500" r="3.500" fill="#f5a51b"/><path d="M14.500 10.500v4" stroke="#fff"/></svg></button>
  <div class="weather"><svg class="news" viewBox="0 0 20 14"><path d="M1 1h15v12H1zM16 3h3v9q0 1-1.500 1H16" fill="none" stroke="#eee" stroke-width="1.300"/><path d="M3 3.500h11M3.500 6.500h4v4h-4zM9.500 6.500H14M9.500 8.500H14M9.500 10.500H14" fill="none" stroke="#eee"/></svg><span>8°C</span><span>Eclaircies</span></div>
  <div class="tray">
    <svg viewBox="0 0 14 14"><path d="M3 9l4-4 4 4" fill="none" stroke="#ddd"/></svg>
    <svg viewBox="0 0 14 14"><path d="M1 2l12-1v10l-8 1-4-1z" fill="none" stroke="#ddd"/><path d="M4.500 6q2-3 5 0M9.500 3.500V6H7M9 8q-3 2-4.500 0" fill="none" stroke="#ddd"/><circle cx="11" cy="11" r="2.800" fill="#ff9a0a"/></svg>
    <svg viewBox="0 0 14 14"><path d="M4 5h8v1.500h1v3h-1V11H4z" fill="#eee"/><path d="M1 3v2.500h3V3M2.500 5.500V8H4" fill="none" stroke="#eee"/></svg>
    <svg viewBox="0 0 14 14"><path d="M13 7q0 1-1.500 1H9l-3 5H5l1-5H3.500L2.500 9.500H1.500L2 7l-.5-2.500h1L3.500 6H6L5 1h1l3 5h2.500Q13 6 13 7z" fill="none" stroke="#ddd"/></svg>
    <svg viewBox="0 0 14 14"><path d="M1 5.500h2L6 3v8L3 8.500H1z" fill="none" stroke="#ccc"/><path d="M8 5q1 2 0 4M10 4q1.800 3 0 6M12 3q2.500 4 0 8" fill="none" stroke="#8a8f99" stroke-width=".9"/></svg>
  </div>
  <div class="clock"><time>21:18</time><span>19/10/2023</span></div>
  <button class="notif" aria-label="Notifications"><svg viewBox="0 0 20 18"><path d="M1 0h13v10H6l-2.500 3v-3H1z" fill="#fff"/><path d="M3.500 3h8M3.500 5.500h8" stroke="#667"/><circle cx="13" cy="12" r="5.700" fill="#33373f" stroke="#888"/></svg><b>9</b></button>
</footer>
</body>
</html>
```
FILE: styles.css
```css
* { box-sizing: border-box; }
html, body { height: 100%; }
body {
  margin: 0;
  min-height: 100vh;
  display: flex;
  flex-direction: column;
  overflow: hidden;
  background: #fff;
  color: #444;
  font: 9px/12px "Liberation Sans", Arial, sans-serif;
}
h1, h2, p, ul, ol { margin: 0; padding: 0; font: inherit; list-style: none; }
button, input, select { font: inherit; color: inherit; }
button {
  display: flex;
  align-items: center;
  justify-content: center;
  padding: 0;
  border: 0;
  background: none;
}
svg { flex: none; display: block; }
.defs { position: absolute; width: 0; height: 0; }
.caret { width: 5px; height: 4px; color: #333; }
.i8 { width: 8px; height: 8px; }
.i10 { width: 10px; height: 10px; }
.i12 { width: 12px; height: 12px; }
.i14 { width: 14px; height: 14px; }
.i18 { width: 18px; height: 18px; }
.i20 { width: 20px; height: 20px; }

/* Title bar */
.titlebar { flex: none; height: 18px; display: flex; align-items: center; gap: 4px; padding: 0 14px 0 2px; }
.titlebar h1 { flex: 1; font: 9px/16px "Open Sans", sans-serif; color: #999; }
.applogo { width: 11px; height: 13px; }
.winbtns { display: flex; gap: 28px; }
.winbtns svg { width: 9px; height: 9px; }

/* Document tabs */
.docbar { flex: none; height: 25px; display: flex; padding-top: 2px; background: #cdcdcd; }
.quick { width: 152px; display: flex; justify-content: space-between; padding: 0 6px 0 7px; }
.quick button { gap: 4px; }
.quick .caret { color: #5b5b5b; }
.home { width: 30px; margin-right: 3px; background: #b9b9b9; border-radius: 3px 3px 0 0; }
.doctab {
  flex: 1;
  display: flex;
  align-items: center;
  justify-content: center;
  gap: 4px;
  position: relative;
  margin-right: 2px;
  padding-right: 8px;
  border-radius: 3px 3px 0 0;
  background: #b9b9b9;
  color: #6b6b6b;
  font-size: 10px;
}
.doctab.active { background: #f1f1f1; color: #333; }
.doctab button { position: absolute; right: 5px; top: 8px; color: #666; }
.docright { width: 169px; display: flex; align-items: center; justify-content: space-between; padding: 0 12px 0 1px; }
.newtab { width: 22px; align-self: stretch; background: #b9b9b9; border-radius: 3px 3px 0 0; }

/* Ribbon */
.ribbon { flex: none; height: 65px; display: flex; background: #f1f1f1; border-bottom: 1px solid #d6d6d6; }
.workspace { padding: 8px 2px 8px 9px; display: flex; }
.workspace button { width: 86px; gap: 4px; border: 1px solid #d0d0d0; border-radius: 3px; font-weight: bold; }
.tools { flex: 1; min-width: 0; display: flex; flex-direction: column; }
.rtabs { display: flex; gap: 17px; padding-left: 11px; }
.rtabs button { padding: 2px 9px; border-bottom: 2px solid transparent; }
.rtabs .on { color: #0d94d8; border-bottom-color: #0d94d8; }
.groups {
  flex: 1;
  display: grid;
  grid-template-columns: 178fr 89fr 143fr 81fr 85fr 85fr 78fr 65fr 99fr;
  padding-bottom: 2px;
}
.group { min-width: 0; display: flex; flex-direction: column; align-items: center; border-right: 1px solid #d9d9d9; }
.group:last-child { border-right: 0; }
.icons { display: flex; gap: 4px; height: 31px; align-items: center; }
.icons button { width: 30px; height: 30px; }
.icons svg { width: 26px; height: 26px; }
.icons .sel { background: #0a96dc; }
.glabel { gap: 2px; white-space: nowrap; }

/* Canvas */
.canvas { flex: 1; min-height: 0; position: relative; display: flex; }
.scene { position: absolute; left: 0; top: 0; width: 100%; height: 100%; }
.cube { font: bold 5px "Liberation Sans", sans-serif; fill: #888; }
.axis { font: bold 7px "Liberation Sans", sans-serif; }
.side { position: relative; width: 237px; display: flex; flex-direction: column; padding: 4px 0 2px 3px; }
.panelhead {
  display: flex;
  align-items: center;
  gap: 7px;
  height: 20px;
  padding: 0 8px 0 4px;
  background: #f1f1f1;
  border: 1px solid #dcdcdc;
  border-bottom: 2px solid #c8c8c8;
  color: #777;
}
.panelhead h2 { flex: 1; }
.rew { width: 8px; height: 6px; }
.treewrap { flex: 1; display: flex; margin: 3px 0 18px 3px; gap: 20px; }
.scroll { width: 5px; border-radius: 2px; background: linear-gradient(#c8c9ca 29px, #96989a 29px); }
.tree { display: flex; flex-direction: column; justify-content: space-between; }
.tree li { display: flex; align-items: center; gap: 7px; }
.tri { width: 7px; height: 9px; }
.node { display: flex; align-items: center; gap: 7px; height: 16px; padding: 0 7px 0 2px; background: #f1f1f1; white-space: nowrap; }
.ic { width: 13px; height: 12px; }
.gear { color: #777; }
.lead { padding-left: 3px; }

/* Dialog */
.dialog { position: absolute; left: 298px; top: 9px; width: 297px; background: #f1f1f1; border: 1px solid #d6d6d6; border-bottom: 2px solid #c8c8c8; }
.dhead { display: flex; align-items: center; gap: 7px; height: 18px; padding: 0 3px; border-bottom: 1px solid #d6d6d6; color: #777; }
.dbody { display: flex; flex-direction: column; gap: 3px; padding: 3px 0 2px; }
.row { display: grid; grid-template-columns: 74px 187px; align-items: center; height: 20px; padding-left: 9px; }
.row label { white-space: nowrap; }
.selectbox { display: flex; align-items: center; height: 20px; padding: 0 3px; background: #fff; border: 1px solid #d2d2d2; }
.selectbox select { flex: 1; appearance: none; border: 0; background: none; padding: 0 3px; }
.row input[type="text"] { width: 100%; height: 20px; padding: 0 2px; border: 1px solid #d2d2d2; background: #fff; }
.row input[type="radio"], .row input[type="checkbox"] {
  appearance: none;
  width: 11px;
  height: 11px;
  margin: 0 0 0 4px;
  border: 1px solid #666;
  border-radius: 2px;
  background: linear-gradient(#fff, #c4c4c4);
}
.row input[type="radio"] { border-radius: 50%; }
.row input[type="radio"]:checked { background: radial-gradient(#000 0 3px, #eee 4px); }
.dialog hr { width: calc(100% - 10px); height: 1px; margin: 3px 10px 2px 1px; border: 0; background: #d2d2d2; }
.dialog hr.thick { height: 2px; }
.pick { display: flex; gap: 8px; }
.pick button:first-child { height: 20px; width: 72px; gap: 2px; background: #0a96dc; color: #fff; white-space: nowrap; }
.dfoot { display: flex; align-items: center; gap: 7px; height: 28px; padding: 0 8px 0 6px; border-top: 1px solid #d6d6d6; color: #666; }
.info { width: 10px; height: 10px; margin-right: auto; }
.dfoot button { width: 47px; height: 15px; border: 1px solid #c2c2c2; background: #ebebeb; }

/* Navigation bar */
.navbar { position: absolute; left: 409px; bottom: 4px; height: 20px; padding: 0 2px 0 1px; display: flex; align-items: center; gap: 6px; background: #f1f1f1; }
.navbar button { gap: 3px; }
.docname { position: absolute; right: 14px; bottom: 6px; font-weight: bold; color: #222; }

/* Timeline */
.timeline { flex: none; height: 40px; display: flex; background: #f1f1f1; border-top: 2px solid #e6e6e6; border-bottom: 1px solid #bbb; padding: 6px 10px 4px 7px; }
.play { display: flex; gap: 7px; width: 104px; height: 24px; }
.steps { display: grid; grid-template-columns: repeat(26, 1fr); width: 487px; height: 25px; }
.steps li { display: flex; flex-direction: column; align-items: center; padding-top: 4px; position: relative; border-bottom: 1px solid #c8c8c8; }
.steps li::before { content: ""; position: absolute; left: 9px; bottom: 0; width: 1px; height: 4px; background: #c8c8c8; }
.steps svg { width: 14px; height: 14px; }
.steps .box { position: absolute; top: 20px; width: 8px; height: 8px; }
.marker { width: 10px; height: 26px; margin-left: -5px; }
.tlset { margin-left: auto; height: 24px; color: #777; }

/* Taskbar */
.taskbar { flex: none; height: 31px; display: flex; background: linear-gradient(90deg, #1b2140, #191e29 26%, #181e2a 60%, #1a2436 75%, #191f2a 85%, #14284a 93%, #1a2232); color: #fff; font: 11px/14px "Open Sans", sans-serif; }
.start { width: 38px; }
.start svg { width: 13px; height: 13px; }
.search { width: 224px; display: flex; align-items: center; gap: 5px; padding: 0 4px 0 8px; background: #f1f1f1; border: 1px solid #b5b5b5; }
.search input { flex: 1; min-width: 0; border: 0; padding: 0 2px; background: none; outline: 0; }
.search input::placeholder { color: #333; opacity: 1; }
.ship { width: 54px; height: 27px; }
.apps { display: flex; margin-left: 1px; }
.apps button { width: 35px; margin: 0 2px; border-bottom: 2px solid transparent; border-top: 2px solid transparent; }
.apps .run { border-bottom-color: #6cb4ea; }
.apps .cur { background: #4d525d; border-top-color: #4d525d; }
.bar { width: 3px; margin: 6px 4px; background: #2e333d; }
.help { width: 24px; margin-left: 72px; }
.weather { display: flex; align-items: center; gap: 6px; margin-left: auto; white-space: nowrap; font-size: 10px; }
.news { width: 19px; height: 14px; }
.tray { display: flex; align-items: center; gap: 5px; margin-left: 18px; }
.tray svg { width: 14px; height: 14px; }
.clock { width: 60px; display: flex; flex-direction: column; align-items: center; justify-content: center; font-size: 9px; }
.notif { position: relative; width: 40px; padding-right: 8px; border-right: 1px solid #6a7078; margin-right: 3px; }
.notif svg { width: 20px; height: 18px; }
.notif b { position: absolute; left: 18px; top: 14px; width: 8px; font: bold 8px/10px "Open Sans", sans-serif; text-align: center; }
```
